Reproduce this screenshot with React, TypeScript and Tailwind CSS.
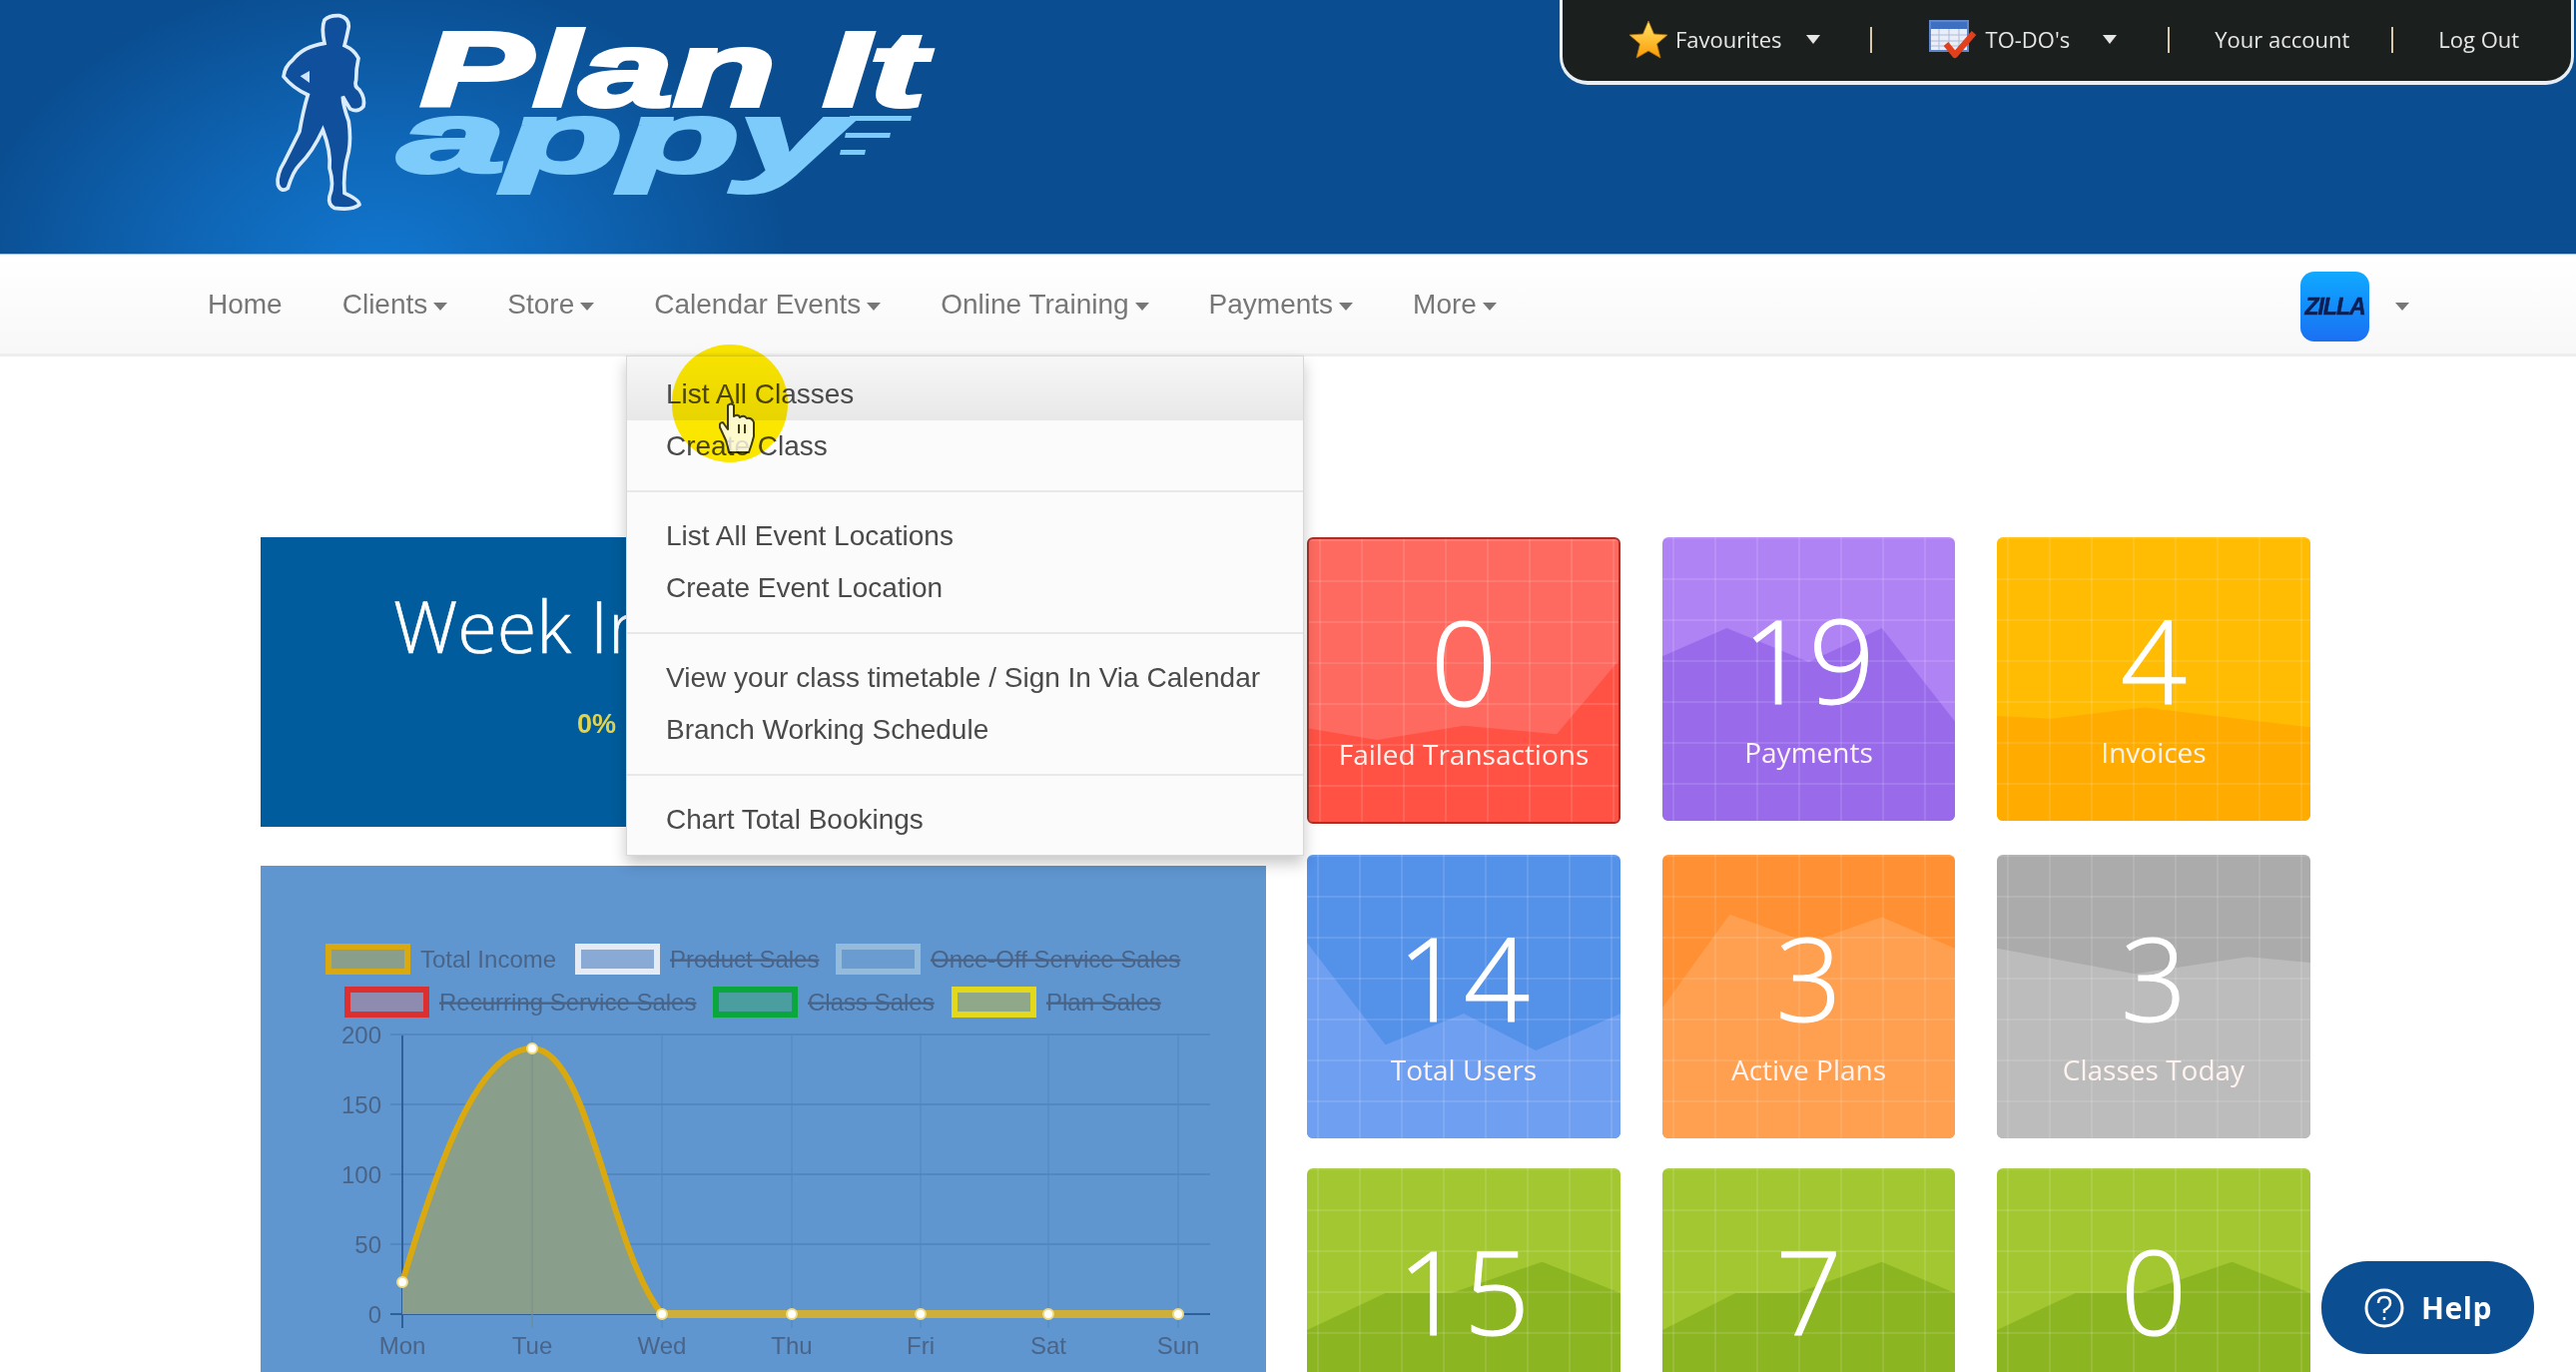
import { Fragment } from "react";

const navItems = [
  { label: "Home", caret: false },
  { label: "Clients", caret: true },
  { label: "Store", caret: true },
  { label: "Calendar Events", caret: true },
  { label: "Online Training", caret: true },
  { label: "Payments", caret: true },
  { label: "More", caret: true },
];

const menuGroups = [
  ["List All Classes", "Create Class"],
  ["List All Event Locations", "Create Event Location"],
  ["View your class timetable / Sign In Via Calendar", "Branch Working Schedule"],
  ["Chart Total Bookings"],
];

const greenWave = "0,57 25,44 46,44 75,33 100,44 100,100 0,100";

const cards = [
  { id: "failed", value: "0", label: "Failed Transactions", bg: "bg-[#ff6a60]", wave: "#ff5245", points: "0,67 22,71 50,66 80,69 100,43 100,100 0,100", cls: "h-[287px] border-2 border-[#a8322a]" },
  { id: "payments", value: "19", label: "Payments", bg: "bg-[#b083f5]", wave: "#996beb", points: "0,42 22,32 50,44 75,32 100,65 100,100 0,100", cls: "h-[284px]" },
  { id: "invoices", value: "4", label: "Invoices", bg: "bg-[#ffbc03]", wave: "#ffab00", points: "0,63 17,64 47,60 100,67 100,100 0,100", cls: "h-[284px]" },
  { id: "users", value: "14", label: "Total Users", bg: "bg-[#5491e9]", wave: "#6f9ff0", points: "0,31 25,67 50,56 73,69 100,56 100,100 0,100", cls: "h-[284px]" },
  { id: "plans", value: "3", label: "Active Plans", bg: "bg-[#ff9034]", wave: "#ffa050", points: "0,54 23,21 50,31 75,22 100,33 100,100 0,100", cls: "h-[284px]" },
  { id: "today", value: "3", label: "Classes Today", bg: "bg-[#ababab]", wave: "#bcbcbc", points: "0,33 44,42 80,36 100,38 100,100 0,100", cls: "h-[284px]" },
  { id: "green-1", value: "15", label: "", bg: "bg-[#a2c731]", wave: "#8cb522", points: greenWave, cls: "h-[284px]" },
  { id: "green-2", value: "7", label: "", bg: "bg-[#a2c731]", wave: "#8cb522", points: greenWave, cls: "h-[284px]" },
  { id: "green-3", value: "0", label: "", bg: "bg-[#a2c731]", wave: "#8cb522", points: greenWave, cls: "h-[284px]" },
];

function Caret({ className }: { className: string }) {
  return <span className={"inline-block h-0 w-0 border-x-transparent border-solid " + className} />;
}

function Logo() {
  return (
    <svg width="720" height="254" viewBox="250 0 720 254" className="absolute left-[250px] top-0">
      <g transform="translate(260 5) scale(0.3333)">
        <path
          d="M195 45 Q210 30 240 32 Q268 38 268 65 Q262 95 255 122 Q285 135 297 160 Q290 190 290 225 Q283 245 300 255 Q318 280 312 305 Q295 325 272 312 Q258 290 250 275 Q250 300 268 350 Q275 400 268 440 Q250 500 255 565 Q300 585 300 600 Q280 618 225 610 Q205 600 210 575 Q225 540 210 490 Q215 440 190 375 Q160 440 120 480 Q100 500 85 550 Q65 565 55 540 Q50 510 75 470 Q100 420 120 380 Q130 320 145 270 Q100 250 72 215 Q75 185 100 165 Q130 125 195 115 Q185 70 195 45Z"
          fill="#104f9c"
          stroke="#dcecff"
          strokeWidth="11"
        />
        <path d="M122 214 L150 198 L150 234 Z" fill="#cfe3fa" />
      </g>
      <text
        x="421"
        y="106"
        fontFamily="Liberation Sans, sans-serif"
        fontWeight="700"
        fontStyle="italic"
        fontSize="106"
        textLength="506"
        lengthAdjust="spacingAndGlyphs"
        fill="#ffffff"
        stroke="#ffffff"
        strokeWidth="4"
      >
        Plan It
      </text>
      <text
        x="399"
        y="172"
        fontFamily="Liberation Sans, sans-serif"
        fontWeight="700"
        fontStyle="italic"
        fontSize="100"
        textLength="448"
        lengthAdjust="spacingAndGlyphs"
        fill="#7ccbfb"
        stroke="#7ccbfb"
        strokeWidth="4"
      >
        appy
      </text>
      <path d="M851 116 H913 L912 121 H850 Z M847 133 H892 L891 138 H846 Z M842 150 H867 L866 155 H841 Z" fill="#7ccbfb" />
    </svg>
  );
}

function StarIcon() {
  return (
    <svg width="40" height="40" viewBox="0 0 40 40">
      <defs>
        <linearGradient id="star" x1="0" y1="0" x2="0" y2="1">
          <stop offset="0" stopColor="#ffe566" />
          <stop offset="1" stopColor="#fb9a05" />
        </linearGradient>
      </defs>
      <path d="M20 1 L25.5 14 L39 15 L28.5 24 L32 38 L20 31 L8 38 L11.5 24 L1 15 L14.5 14 Z" fill="url(#star)" stroke="#b8730a" strokeWidth="0.8" strokeLinejoin="round" />
    </svg>
  );
}

function TodoIcon() {
  return (
    <svg width="48" height="40" viewBox="0 0 48 40">
      <rect x="1" y="1" width="38" height="30" fill="#e9eef8" />
      <rect x="1" y="1" width="38" height="8" fill="#3f6fc0" />
      <path d="M1 15 H39 M1 21 H39 M1 26 H39 M10 9 V31 M20 9 V31 M30 9 V31" stroke="#aebcd8" strokeWidth="1" />
      <rect x="1" y="1" width="38" height="30" fill="none" stroke="#5d86cc" strokeWidth="2" />
      <path d="M17 24 L26 35 L45 13" fill="none" stroke="#e2401c" strokeWidth="6" strokeLinejoin="round" />
    </svg>
  );
}

function TopBar() {
  return (
    <div className="absolute right-[2px] top-[-3px] flex h-[88px] w-[1016px] items-center rounded-b-[28px] border-x-[3px] border-b-[4px] border-[#e8eef5] bg-[#1b201f] pl-[66px] pt-[1px] font-['Open_Sans',sans-serif] text-[22px] text-[#e6e6e6]">
      <StarIcon />
      <span className="ml-[7px]">Favourites</span>
      <Caret className="ml-[24px] border-x-[7px] border-t-[9px] border-t-[#e6e6e6]" />
      <span className="ml-[50px] h-[26px] w-[2px] bg-[#d9c9a8]" />
      <span className="ml-[57px] flex"><TodoIcon /></span>
      <span className="ml-[9px]">TO-DO's</span>
      <Caret className="ml-[33px] border-x-[7px] border-t-[9px] border-t-[#e6e6e6]" />
      <span className="ml-[51px] h-[26px] w-[2px] bg-[#d9c9a8]" />
      <span className="ml-[45px]">Your account</span>
      <span className="ml-[42px] h-[26px] w-[2px] bg-[#d9c9a8]" />
      <span className="ml-[45px]">Log Out</span>
    </div>
  );
}

function Nav() {
  return (
    <nav className="relative flex h-[103px] items-center border-t border-[#9cc4ec] border-b-[3px] border-b-[#eeeeee] bg-gradient-to-b from-white to-[#f8f8f8] pl-[178px] font-['Liberation_Sans',sans-serif] text-[28px] text-[#777777]">
      {navItems.map((item) => (
        <span key={item.label} className="flex items-center px-[30px] pt-[1px]">
          {item.label}
          {item.caret && <Caret className="ml-[6px] mt-[3px] border-x-[7px] border-t-[8px] border-t-[#777777]" />}
        </span>
      ))}
      <div className="absolute left-[2304px] top-[17px] flex h-[70px] w-[69px] items-center justify-center rounded-[14px] bg-gradient-to-b from-[#11a9ff] to-[#1b6ff2] text-[23px] font-bold italic tracking-[-1px] text-[#0b1f55] [-webkit-text-stroke:0.5px_#0b1f55]">
        ZILLA
      </div>
      <Caret className="absolute left-[2399px] top-[48px] border-x-[7px] border-t-[8px] border-t-[#777777]" />
      <Dropdown />
    </nav>
  );
}

function Dropdown() {
  return (
    <div className="absolute left-[627px] top-[101px] z-20 h-[501px] w-[679px] border border-[#d8d8d8] bg-[#fbfbfb] pb-[8px] text-[#4a4a4a] shadow-[0_8px_14px_rgba(0,0,0,0.22)]">
      {menuGroups.map((group, i) => (
        <Fragment key={group[0]}>
          {i > 0 && <div className="my-[18px] h-[2px] bg-[#e8e8e8]" />}
          {group.map((entry, j) => (
            <div
              key={entry}
              className={
                i === 0 && j === 0
                  ? "flex h-[64px] items-start bg-gradient-to-b from-[#f7f7f7] to-[#e8e8e8] pl-[39px] pt-[12px] leading-[52px]"
                  : "flex h-[52px] items-center pl-[39px]"
              }
            >
              {entry}
            </div>
          ))}
        </Fragment>
      ))}
    </div>
  );
}

function Pointer() {
  return (
    <>
      <div className="absolute left-[673px] top-[345px] z-30 h-[118px] w-[116px] rounded-full bg-[#ffea00] mix-blend-multiply" />
      <svg width="36" height="53" viewBox="0 0 36 53" className="absolute left-[720px] top-[403px] z-40 opacity-80">
        <path
          d="M9 3 Q12 0 15 3 L15 14 Q19 11 21 15 Q25 12 28 16 Q33 15 35 20 L35 34 Q33 42 30 50 L10 50 Q9 44 7 38 L1 25 Q0 20 4 20 L9 27 Z M20 22 V31 M26 22 V31"
          fill="#ffffff"
          stroke="#111111"
          strokeWidth="2"
          strokeLinejoin="round"
        />
      </svg>
    </>
  );
}

function LegendItem({ x, y, w, stroke, fill, label, off }: { x: number; y: number; w: number; stroke: string; fill: string; label: string; off?: boolean }) {
  return (
    <g>
      <rect x={x + 3} y={y + 3} width={w - 6} height={25} fill={fill} stroke={stroke} strokeWidth="6" />
      <text x={x + w + 10} y={y + 24} className={off ? "line-through" : ""}>
        {label}
      </text>
    </g>
  );
}

function Chart() {
  const xs = [403, 533, 663, 793, 922, 1050, 1180];
  const days = ["Mon", "Tue", "Wed", "Thu", "Fri", "Sat", "Sun"];
  const ticks = [
    { y: 1036, label: "200" },
    { y: 1106, label: "150" },
    { y: 1176, label: "100" },
    { y: 1246, label: "50" },
    { y: 1316, label: "0" },
  ];
  return (
    <div className="h-[507px] bg-[#5f96d0]">
      <svg width="1007" height="507" viewBox="261 867 1007 507" className="block" fontFamily="Liberation Sans, sans-serif" fontSize="24" fill="#4a6488">
        <LegendItem x={326} y={945} w={85} stroke="#d9a90f" fill="#8a9e8c" label="Total Income" />
        <LegendItem x={576} y={945} w={85} stroke="#e4ebf5" fill="#8aaad6" label="Product Sales" off />
        <LegendItem x={837} y={945} w={85} stroke="#95bbdc" fill="#6b9cd1" label="Once-Off Service Sales" off />
        <LegendItem x={345} y={988} w={85} stroke="#dc3030" fill="#8d8cb0" label="Recurring Service Sales" off />
        <LegendItem x={714} y={988} w={85} stroke="#0aa83c" fill="#4b9e9f" label="Class Sales" off />
        <LegendItem x={953} y={988} w={85} stroke="#e4d81c" fill="#8fa88a" label="Plan Sales" off />

        {ticks.map((t) => (
          <Fragment key={t.label}>
            <line x1="391" x2="1212" y1={t.y} y2={t.y} stroke={t.label === "0" ? "#2f5f98" : "#4778b0"} strokeWidth={t.label === "0" ? 2 : 1} />
            <text x="382" y={t.y + 9} textAnchor="end">{t.label}</text>
          </Fragment>
        ))}
        {xs.map((x, i) => (
          <Fragment key={x}>
            <line x1={x} x2={x} y1="1037" y2="1330" stroke={i === 0 ? "#2f5f98" : "#5285bd"} strokeWidth={i === 0 ? 2 : 1} />
            <text x={x} y="1356" textAnchor="middle">{days[i]}</text>
          </Fragment>
        ))}

        <path d="M403 1284 C440 1160 480 1050 533 1050 C590 1050 610 1250 663 1316 L403 1316 Z" fill="#8a9e8c" />
        <line x1="533" x2="533" y1="1050" y2="1330" stroke="#7a9088" strokeWidth="1" />
        <path d="M403 1284 C440 1160 480 1050 533 1050 C590 1050 610 1250 663 1316" fill="none" stroke="#d9a90f" strokeWidth="6" />
        <path d="M663 1316 H1180" fill="none" stroke="#cdaf3a" strokeWidth="8" />
        {xs.map((x, i) => (
          <circle key={x} cx={x} cy={i === 0 ? 1284 : i === 1 ? 1050 : 1316} r="5" fill="#ffffff" stroke="#f0dc80" strokeWidth="2" />
        ))}
      </svg>
    </div>
  );
}

function StatCard({ card }: { card: (typeof cards)[number] }) {
  return (
    <div className={"relative overflow-hidden rounded-[6px] text-center text-white " + card.bg + " " + card.cls}>
      <svg viewBox="0 0 100 100" preserveAspectRatio="none" className="absolute inset-0 h-full w-full">
        <polygon points={card.points} fill={card.wave} />
      </svg>
      <div className="absolute inset-0 bg-[linear-gradient(to_right,rgba(255,255,255,0.11)_2px,transparent_2px),linear-gradient(to_bottom,rgba(255,255,255,0.11)_2px,transparent_2px)] bg-[size:42px_41px] bg-[position:10px_0]" />
      <div className="relative pt-[62px] font-['Open_Sans',sans-serif]">
        <div className="text-[116px] font-light leading-[120px] [-webkit-text-stroke:1px_white]">{card.value}</div>
        {card.label && <div className="mt-[15px] text-[28px] leading-[36px] text-[#fff3f0]">{card.label}</div>}
      </div>
    </div>
  );
}

export default function App() {
  return (
    <div className="relative h-[1374px] w-[2580px] overflow-hidden bg-white">
      <header className="relative h-[254px] bg-[#0a4d90] bg-[radial-gradient(ellipse_420px_300px_at_380px_270px,#1177cf_0%,#0f66b6_45%,#0a4d90_100%)]">
        <Logo />
        <TopBar />
      </header>
      <Nav />
      <Pointer />

      <main className="flex gap-[41px] pl-[261px] pt-[181px]">
        <div className="flex w-[1007px] flex-col gap-[39px]">
          <div className="h-[290px] overflow-hidden bg-[#005c9c] pl-[133px] pt-[38px] font-['Open_Sans',sans-serif] text-white">
            <div className="text-[72px] font-light leading-[100px] [-webkit-text-stroke:0.6px_white]">Week Income</div>
            <div className="ml-[184px] mt-[29px] font-['Liberation_Sans',sans-serif] text-[27px] font-bold text-[#e3d44e]">0%</div>
          </div>
          <Chart />
        </div>

        <div className="grid grid-cols-[314px_293px_314px] grid-rows-[288px_284px_284px] gap-x-[42px] gap-y-[30px]">
          {cards.map((card) => (
            <StatCard key={card.id} card={card} />
          ))}
        </div>
      </main>

      <button className="absolute left-[2325px] top-[1263px] flex h-[93px] w-[213px] items-center justify-center gap-[16px] rounded-[46px] bg-[#0b4f92] font-['Open_Sans',sans-serif] text-[30px] font-bold tracking-[0.5px] text-white">
        <svg width="42" height="42" viewBox="0 0 42 42" fill="none" stroke="#ffffff" strokeWidth="3">
          <circle cx="21" cy="21" r="18" />
          <path d="M15 16 Q15 10 21 10 Q27 10 27 16 Q27 20 21 23 V26 M21 30 V33" strokeWidth="2.5" />
        </svg>
        Help
      </button>
    </div>
  );
}
